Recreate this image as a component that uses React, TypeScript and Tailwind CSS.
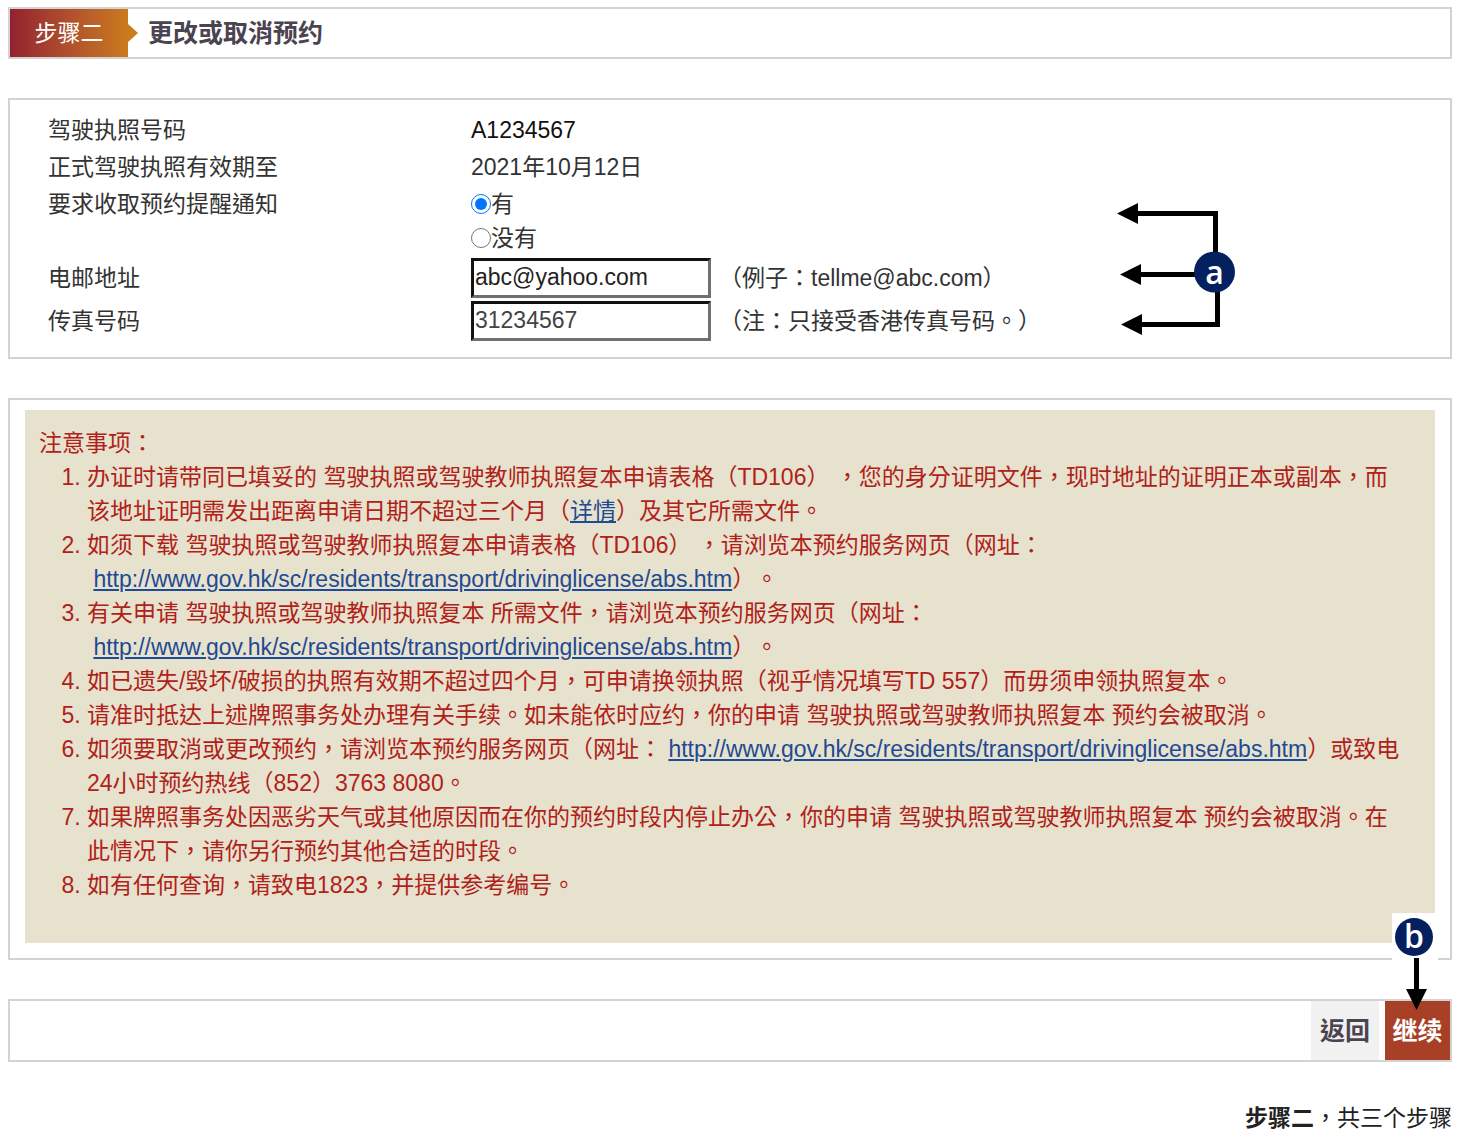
import type { ReactNode } from "react";

const SITE = "http://www.gov.hk/sc/residents/transport/drivinglicense/abs.htm";

function SiteLink({ href, children }: { href: string; children: ReactNode }) {
  return (
    <a href={href} className="text-[#1f4a94] underline decoration-2 underline-offset-2">
      {children}
    </a>
  );
}

const notes: ReactNode[] = [
  <>
    办证时请带同已填妥的 驾驶执照或驾驶教师执照复本申请表格（TD106） ，您的身分证明文件，现时地址的证明正本或副本，而该地址证明需发出距离申请日期不超过三个月（
    <SiteLink href="#details">详情</SiteLink>
    ）及其它所需文件。
  </>,
  <>
    如须下载 驾驶执照或驾驶教师执照复本申请表格（TD106） ，请浏览本预约服务网页（网址：
    <br />
    &nbsp;<SiteLink href={SITE}>{SITE}</SiteLink>）。
  </>,
  <>
    有关申请 驾驶执照或驾驶教师执照复本 所需文件，请浏览本预约服务网页（网址：
    <br />
    &nbsp;<SiteLink href={SITE}>{SITE}</SiteLink>）。
  </>,
  <>如已遗失/毁坏/破损的执照有效期不超过四个月，可申请换领执照（视乎情况填写TD 557）而毋须申领执照复本。</>,
  <>请准时抵达上述牌照事务处办理有关手续。如未能依时应约，你的申请 驾驶执照或驾驶教师执照复本 预约会被取消。</>,
  <>
    如须要取消或更改预约，请浏览本预约服务网页（网址： <SiteLink href={SITE}>{SITE}</SiteLink>
    ）或致电24小时预约热线（852）3763 8080。
  </>,
  <>如果牌照事务处因恶劣天气或其他原因而在你的预约时段内停止办公，你的申请 驾驶执照或驾驶教师执照复本 预约会被取消。在此情况下，请你另行预约其他合适的时段。</>,
  <>如有任何查询，请致电1823，并提供参考编号。</>,
];

// callout pointing at the reminder, email and fax rows
function CalloutA() {
  return (
    <svg className="absolute right-[210px] top-[100px]" width="130" height="140" viewBox="1110 200 130 140">
      <g stroke="#000" strokeWidth="5" fill="none">
        <path d="M1136 213.5H1215.5V256" />
        <path d="M1138 274.5H1198" />
        <path d="M1140 324.5H1217.5V290" />
      </g>
      <path d="M1117 213.5L1138 203V224ZM1120 274.5L1141 264V285ZM1121 324.5L1142 314V335Z" />
      <circle cx="1214.5" cy="272" r="20.5" fill="#04205f" />
      <text x="1214.5" y="284" textAnchor="middle" fill="#fff" className="font-['Open_Sans',sans-serif] text-[32px] font-semibold">
        a
      </text>
    </svg>
  );
}

// callout pointing at the continue button
function CalloutB() {
  return (
    <svg className="absolute right-[11px] -top-[89px]" width="48" height="100" viewBox="1391 911 48 100">
      <rect x="1392" y="912" width="46" height="50" fill="#fff" />
      <path d="M1416.5 957V990" stroke="#000" strokeWidth="5" />
      <path d="M1406 988H1427L1416.5 1009Z" />
      <circle cx="1414" cy="936" r="19" fill="#04205f" />
      <text x="1414" y="947" textAnchor="middle" fill="#fff" className="font-['Open_Sans',sans-serif] text-[32px] font-semibold">
        b
      </text>
    </svg>
  );
}

const inputClass =
  "h-10 w-60 shrink-0 border-[3px] border-t-[#111] border-l-[#111] border-r-[#707070] border-b-[#707070] bg-white px-px outline-none";

export default function App() {
  return (
    <main
      lang="zh-Hant"
      className="flex flex-col gap-[39px] bg-white pt-[7px] pr-[14px] pb-2 pl-2 font-['Liberation_Sans','Noto_Sans_CJK_TC',sans-serif] text-[23px] leading-[34px] text-[#333] [text-spacing-trim:space-all]"
    >
      <header className="flex h-[52px] items-stretch border-2 border-[#d3d3d3]">
        <div className="flex w-[118px] items-center justify-center bg-linear-to-r from-[#93202f] to-[#cb7a1c] text-white">
          步骤二
        </div>
        <svg width="10" height="20" viewBox="0 0 10 20" className="self-center">
          <path d="M0 1L10 10L0 19Z" fill="#cb7a1c" />
        </svg>
        <h1 className="flex items-center pl-[10px] text-[25px] font-bold text-[#4a4350]">更改或取消预约</h1>
      </header>

      <form className="relative border-2 border-[#d3d3d3] pt-[13px] pr-4 pb-[15px] pl-[38px]">
        <div className="grid grid-cols-[423px_1fr]">
          <div className="h-[37px]">驾驶执照号码</div>
          <div className="text-[#111]">A1234567</div>
          <div className="h-[37px]">正式驾驶执照有效期至</div>
          <div>2021年10月12日</div>
          <div id="remind">要求收取预约提醒通知</div>
          <div role="radiogroup" aria-labelledby="remind" className="mb-px">
            <label className="flex items-center">
              <input type="radio" name="remind" defaultChecked className="size-5 accent-[#0075ff]" />有
            </label>
            <label className="flex items-center">
              <input type="radio" name="remind" className="size-5 accent-[#0075ff]" />没有
            </label>
          </div>
          <label htmlFor="email" className="flex h-[43px] items-center">电邮地址</label>
          <div className="flex items-center gap-2">
            <input id="email" type="text" defaultValue="abc@yahoo.com" className={`${inputClass} text-[#222]`} />
            <span>（例子：tellme@abc.com）</span>
          </div>
          <label htmlFor="fax" className="flex h-[43px] items-center">传真号码</label>
          <div className="flex items-center gap-2">
            <input id="fax" type="text" defaultValue="31234567" className={`${inputClass} text-[#444]`} />
            <span>（注：只接受香港传真号码。）</span>
          </div>
        </div>
        <CalloutA />
      </form>

      <section className="border-2 border-[#d3d3d3] px-[15px] pt-[10px] pb-[15px]">
        <div className="bg-[#e7e2cd] pt-4 pr-[27px] pb-[41px] pl-[14px] text-[#b0211a]">
          <h2>注意事项：</h2>
          <ol className="list-decimal pl-12">
            {notes.map((note, i) => (
              <li key={i}>{note}</li>
            ))}
          </ol>
        </div>
      </section>

      <nav className="relative flex h-[63px] items-stretch justify-end gap-[6px] border-2 border-[#d3d3d3] text-[25px] font-bold">
        <button type="button" className="w-[68px] bg-[#f1f1f1] text-[#4a4350]">返回</button>
        <button type="button" className="w-[65px] bg-[#a83f27] text-white">继续</button>
        <CalloutB />
      </nav>

      <footer className="text-right text-[#222]">
        <b>步骤二</b>，共三个步骤
      </footer>
    </main>
  );
}
